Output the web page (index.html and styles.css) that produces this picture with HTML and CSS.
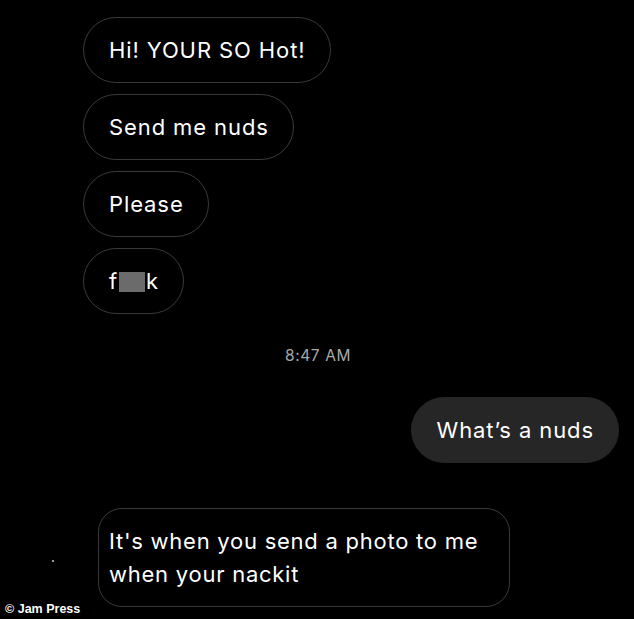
FILE: index.html
```html
<!DOCTYPE html>
<html>
<head>
<meta charset="utf-8">
<link rel="stylesheet" href="styles.css">
</head>
<body>
<div class="chat">
  <div class="group">
    <div class="bubble in">Hi! YOUR SO Hot!</div>
    <div class="bubble in">Send me nuds</div>
    <div class="bubble in">Please</div>
    <div class="bubble in">f<span class="censor"></span>k</div>
  </div>
  <div class="time">8:47 AM</div>
  <div class="row-out">
    <div class="bubble out">What’s a nuds</div>
  </div>
  <div class="row-in">
    <span class="dot"></span>
    <div class="bubble in multi">It's when you send a photo to me<br>when your nackit</div>
  </div>
</div>
<div class="credit">© Jam Press</div>
</body>
</html>
```
FILE: styles.css
```css
html, body {
  margin: 0;
  padding: 0;
  background: #000;
  width: 634px;
  height: 619px;
  overflow: hidden;
  font-family: Inter, "Noto Sans", Roboto, sans-serif;
  color: #fff;
}
.chat {
  position: relative;
  display: flex;
  flex-direction: column;
  padding-top: 17px;
}
.group {
  display: flex;
  flex-direction: column;
  align-items: flex-start;
  gap: 11px;
  padding-left: 83px;
}
.bubble {
  box-sizing: border-box;
  font-size: 22px;
  line-height: 26px;
  letter-spacing: 0.9px;
  padding: 19px 24px 19px 25px;
  border-radius: 33px;
  white-space: nowrap;
}
.bubble.in {
  border: 1.5px solid #3a3a3a;
}
.bubble.out {
  background: #262626;
  border: 1px solid #262626;
  padding-left: 25px;
  padding-right: 24px;
}
.censor {
  display: inline-block;
  width: 26px;
  height: 20px;
  background: #6b6b6b;
  vertical-align: -3px;
  margin: 0 1px;
}
.time {
  text-align: center;
  font-size: 15.5px;
  letter-spacing: 0.6px;
  color: #a8a8a8;
  margin-top: 33px;
  line-height: 18px;
  padding-left: 2px;
}
.row-out {
  display: flex;
  justify-content: flex-end;
  padding-right: 15px;
  margin-top: 32px;
}
.row-in {
  display: flex;
  align-items: center;
  margin-top: 45px;
  padding-left: 98px;
  position: relative;
}
.bubble.multi {
  width: 412px;
  padding: 16px 20px 15px 10px;
  line-height: 33px;
  letter-spacing: 0.75px;
  border-radius: 24px;
}
.dot {
  position: absolute;
  left: 52px;
  top: 52px;
  width: 2px;
  height: 2px;
  background: #ccc;
  border-radius: 1px;
}
.credit {
  position: absolute;
  left: 5px;
  top: 602px;
  font-family: "Liberation Sans", Arial, sans-serif;
  font-weight: bold;
  font-size: 12.5px;
  color: #fff;
}
```
